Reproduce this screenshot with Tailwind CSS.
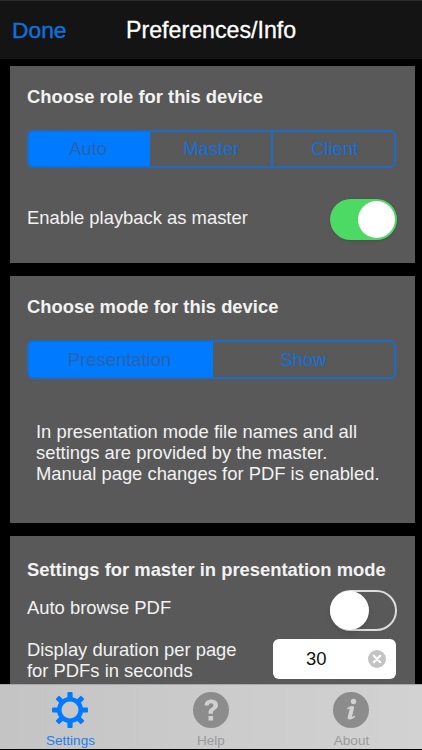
<!DOCTYPE html>
<html><head><script src="https://cdn.jsdelivr.net/npm/@tailwindcss/browser@4"></script></head>
<body class="bg-black">
<div class="w-[422px] h-[750px] overflow-hidden relative bg-black flex flex-col font-['Liberation_Sans',Arial,sans-serif]">
  <header class="h-[59px] shrink-0 bg-[#141414] relative border-t border-[#2a2a2a]">
    <span class="absolute left-[12px] top-[14px] text-[22.8px] leading-[30px] text-[#0f70dc] [-webkit-text-stroke:0.4px_#0f70dc]">Done</span>
    <span class="absolute left-[126px] top-[14px] text-[23.2px] leading-[30px] text-white [-webkit-text-stroke:0.3px_#ffffff]">Preferences/Info</span>
  </header>
  <main class="flex flex-col gap-[13px] pl-[10px] pr-[7px] pt-[7px]">
    <section class="h-[197px] shrink-0 bg-[#595959] pl-[17px] pr-[18px] pt-[20px]">
      <h2 class="text-[18.4px] leading-[22px] font-bold text-[#f2f2f2]">Choose role for this device</h2>
      <div class="mt-[22px] mr-[1px] h-[38px] flex border-2 border-[#1a6cc8] rounded-[6px] overflow-hidden text-[18.4px] text-[#0f70dc]">
        <div class="flex-1 bg-[#007aff] text-[#2a63a8] flex items-center justify-center pr-[3px]">Auto</div>
        <div class="flex-1 flex items-center justify-center border-r-2 border-[#1a6cc8] pl-[2px]">Master</div>
        <div class="flex-1 flex items-center justify-center pl-[3px]">Client</div>
      </div>
      <div class="mt-[31px] flex items-center justify-between h-[41px]">
        <span class="text-[18.4px] text-[#f2f2f2] -mt-[3px]">Enable playback as master</span>
        <div class="w-[67px] h-[41px] rounded-full bg-[#4cd964] relative shadow-sm">
          <div class="absolute right-[2px] top-[2px] w-[37px] h-[37px] rounded-full bg-white"></div>
        </div>
      </div>
    </section>
    <section class="h-[247px] shrink-0 bg-[#595959] pl-[17px] pr-[18px] pt-[20px]">
      <h2 class="text-[18.4px] leading-[22px] font-bold text-[#f2f2f2]">Choose mode for this device</h2>
      <div class="mt-[22px] mr-[1px] h-[39px] flex border-2 border-[#1a6cc8] rounded-[6px] overflow-hidden text-[18.4px] text-[#0f70dc]">
        <div class="w-[184px] bg-[#007aff] text-[#2a63a8] flex items-center justify-center pr-[3px]">Presentation</div>
        <div class="flex-1 flex items-center justify-center">Show</div>
      </div>
      <p class="mt-[42px] ml-[9px] text-[18.4px] leading-[21px] text-[#f2f2f2] whitespace-nowrap">In presentation mode file names and all<br>settings are provided by the master.<br>Manual page changes for PDF is enabled.</p>
    </section>
    <section class="h-[160px] shrink-0 bg-[#595959] pl-[17px] pr-[18px] pt-[23px]">
      <h2 class="text-[18.4px] leading-[22px] font-bold text-[#f2f2f2] whitespace-nowrap">Settings for master in presentation mode</h2>
      <div class="mt-[9px] flex items-center justify-between h-[41px]">
        <span class="text-[18.4px] text-[#f2f2f2] -mt-[5px]">Auto browse PDF</span>
        <div class="w-[67px] h-[41px] rounded-full border-2 border-[#dcdcdc] relative">
          <div class="absolute -left-[2px] -top-[1px] w-[39px] h-[39px] rounded-full bg-white shadow-md"></div>
        </div>
      </div>
      <div class="mt-[5px] mr-[1px] flex items-center justify-between">
        <span class="text-[18.4px] leading-[21px] text-[#f2f2f2] mt-[3px]">Display duration per page<br>for PDFs in seconds</span>
        <div class="w-[123px] h-[40px] rounded-[6px] bg-white relative flex items-center pl-[33px] text-[18.4px] text-[#111]">30
          <svg class="absolute right-[10px] top-[11px]" width="18" height="18" viewBox="0 0 18 18"><circle cx="9" cy="9" r="9" fill="#c4c4c4"/><path d="M5.8 5.8l6.4 6.4M12.2 5.8l-6.4 6.4" stroke="#fff" stroke-width="2.2" stroke-linecap="round"/></svg>
        </div>
      </div>
    </section>
  </main>
  <nav class="absolute left-0 right-0 top-[684px] h-[65px] bg-linear-to-r from-[#c4c4c4] via-[#cbcbcb] to-[#d2d2d2] border-t border-[#a8a8a8] flex">
    <div class="w-[141px] relative text-center">
      <svg class="absolute left-[52px] top-[7px]" width="36" height="36" viewBox="0 0 36 36">
        <g fill="#007aff">
          <rect x="15.4" y="0" width="5.2" height="36" rx="1"/>
          <rect x="15.4" y="0" width="5.2" height="36" rx="1" transform="rotate(45 18 18)"/>
          <rect x="15.4" y="0" width="5.2" height="36" rx="1" transform="rotate(90 18 18)"/>
          <rect x="15.4" y="0" width="5.2" height="36" rx="1" transform="rotate(135 18 18)"/>
        </g>
        <circle cx="18" cy="18" r="13" fill="#007aff"/>
        <circle cx="18" cy="18" r="8.5" fill="#c8c8c8"/>
      </svg>
      <span class="absolute left-0 w-full top-[46px] text-[13.5px] leading-[20px] text-[#1a7ff0]">Settings</span>
    </div>
    <div class="w-[140px] relative text-center">
      <svg class="absolute left-[52px] top-[7px]" width="36" height="36" viewBox="0 0 36 36">
        <circle cx="18" cy="18" r="18" fill="#8c8c8c"/>
        <path d="M11.5 13.5c.3-4 3.2-6 6.8-6 3.8 0 6.7 2.2 6.7 5.6 0 2.6-1.5 3.9-3.2 5-1.4.9-1.9 1.5-1.9 3v.6h-4.4v-1c0-2.3.8-3.5 2.6-4.7 1.4-.9 2.3-1.6 2.3-2.8 0-1.2-1-2-2.3-2-1.5 0-2.4 1-2.5 2.3z" fill="#d0d0d0"/>
        <rect x="15.5" y="24" width="4.6" height="4.6" rx=".6" fill="#d0d0d0"/>
      </svg>
      <span class="absolute left-0 w-full top-[46px] text-[13.5px] leading-[20px] text-[#9a9a9a]">Help</span>
    </div>
    <div class="w-[141px] relative text-center">
      <svg class="absolute left-[52px] top-[7px]" width="36" height="36" viewBox="0 0 36 36">
        <circle cx="18" cy="18" r="18" fill="#8c8c8c"/>
        <circle cx="20.5" cy="9.5" r="2.7" fill="#d2d2d2"/>
        <path d="M14 16.2c2-1.6 3.6-2.3 5.2-2.3 1.6 0 2.2 1 1.8 2.6l-1.9 7.4c-.2.8.3 1 1 .6l1.6-1 .7 1.1c-2 1.9-3.9 3-5.6 3-1.8 0-2.5-1.1-2-3l1.8-7c.2-.9-.3-1.1-1-.7l-1 .6z" fill="#d2d2d2"/>
      </svg>
      <span class="absolute left-0 w-full top-[46px] text-[13.5px] leading-[20px] text-[#9a9a9a]">About</span>
    </div>
  </nav>
</div>
</body></html>
